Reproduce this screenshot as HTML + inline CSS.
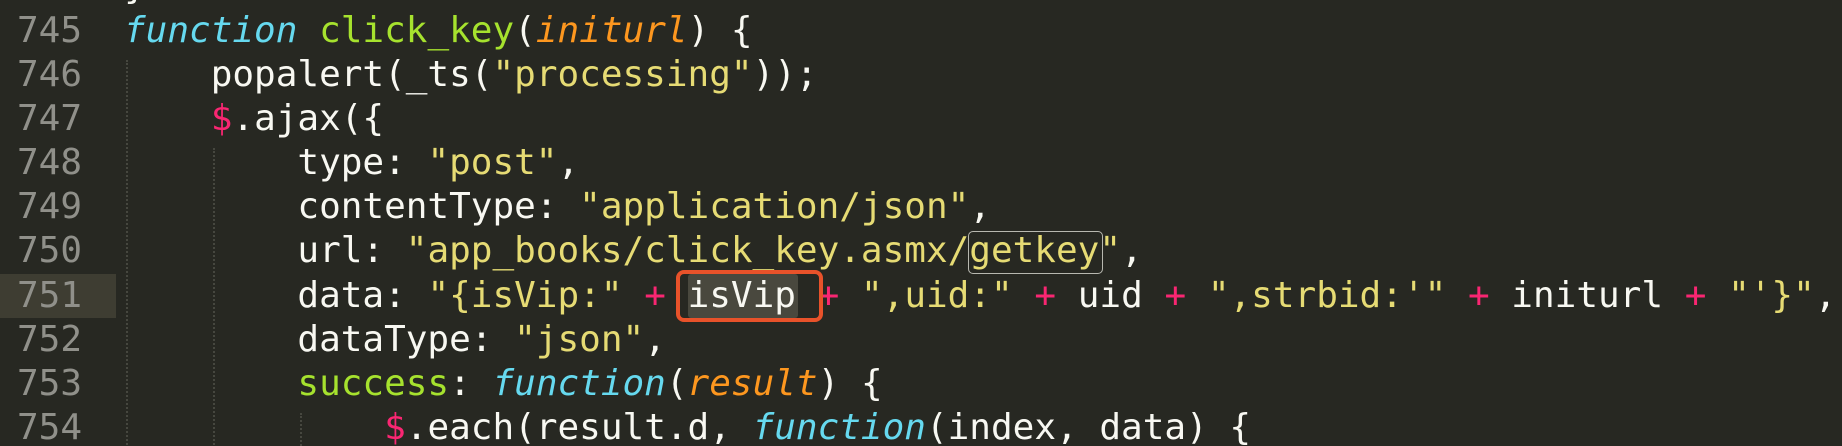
<!DOCTYPE html>
<html><head><meta charset="utf-8"><style>
html,body{margin:0;padding:0;width:1842px;height:446px;overflow:hidden;background:#272822;}
.wrap{position:relative;width:1842px;height:446px;overflow:hidden;background:#272822;}
pre{margin:0;position:absolute;font-family:"DejaVu Sans Mono","Liberation Mono",monospace;font-size:36px;line-height:44.1px;white-space:pre;}
.code{left:124px;top:-35.1px;color:#f8f8f2;}
.nums{left:0;width:82px;text-align:right;top:-35.1px;color:#90908a;}
.k{color:#66d9ef;font-style:italic}
.f{color:#a6e22e}
.p{color:#fd971f;font-style:italic}
.s{color:#e6db74}
.o{color:#f92672}
.hl{position:absolute;left:0;top:273.6px;width:116px;height:44.1px;background:#3e3d32;}
.g{position:absolute;width:0;border-left:2px dotted #46473f;}
.sel{position:absolute;left:688px;top:273.6px;width:110px;height:44.1px;background:#49483e;border-radius:3px;}
.box{position:absolute;left:676px;top:270px;width:139px;height:44px;border:4px solid #e8522a;border-radius:8px;}
.gk{position:absolute;left:968px;top:231px;width:133px;height:41px;border:1.5px solid #b8b8b0;border-radius:5px;}
</style></head><body><div class="wrap">
<div class="hl"></div>
<div class="g" style="left:126px;top:60px;height:400px"></div>
<div class="g" style="left:213px;top:148px;height:300px"></div>
<div class="g" style="left:300px;top:413px;height:40px"></div>
<div class="sel"></div>
<pre class="nums">744
745
746
747
748
749
750
751
752
753
754</pre>
<pre class="code">}
<span class="k">function</span> <span class="f">click_key</span>(<span class="p">initurl</span>) {
    popalert(_ts(<span class="s">"processing"</span>));
    <span class="o">$</span>.ajax({
        type: <span class="s">"post"</span>,
        contentType: <span class="s">"application/json"</span>,
        url: <span class="s">"app_books/click_key.asmx/getkey"</span>,
        data: <span class="s">"{isVip:"</span> <span class="o">+</span> isVip <span class="o">+</span> <span class="s">",uid:"</span> <span class="o">+</span> uid <span class="o">+</span> <span class="s">",strbid:'"</span> <span class="o">+</span> initurl <span class="o">+</span> <span class="s">"'}"</span>,
        dataType: <span class="s">"json"</span>,
        <span class="f">success</span>: <span class="k">function</span>(<span class="p">result</span>) {
            <span class="o">$</span>.each(result.d, <span class="k">function</span>(index, data) {</pre>
<div class="box"></div>
<div class="gk"></div>
</div></body></html>
